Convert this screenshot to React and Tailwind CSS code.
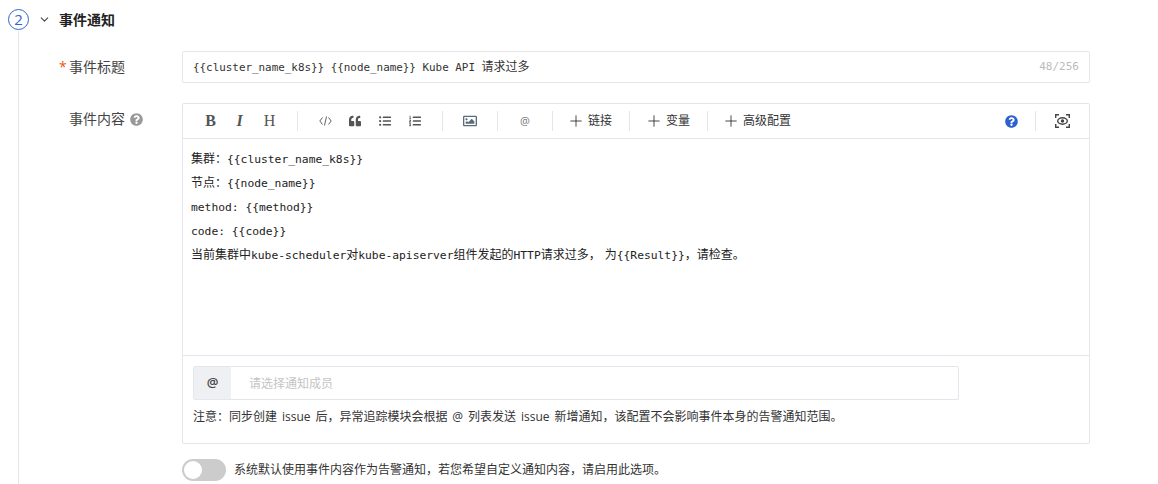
import { ChevronDown, Plus } from 'lucide-react';
import { FaQuoteLeft, FaListUl, FaListOl, FaRegImage, FaQuestionCircle } from 'react-icons/fa';

const sans = "font-['Open_Sans','Noto_Sans_CJK_SC',sans-serif]";
const mono = "font-['DejaVu_Sans_Mono','Noto_Sans_CJK_SC',monospace]";
const serif = "font-['Liberation_Serif',serif]";

// latin runs in the editor are a bit narrower than the CJK ones
const M = ({ children }) => <span className="text-[11.3px]">{children}</span>;

const Divider = ({ className }) => <span className={`block h-5 w-px bg-[#e4e6eb] shrink-0 ${className}`} />;

const CodeIcon = () => (
  <svg width="13" height="10" viewBox="0 0 13 10" fill="none" stroke="#5f6368" strokeWidth="1">
    <path d="M3.5 1.5 0.8 5l2.7 3.5M9.5 1.5 12.2 5 9.5 8.5M7.5 0.5 5.5 9.5" />
  </svg>
);

const PreviewIcon = () => (
  <svg width="15" height="14" viewBox="0 0 15 14" fill="none" stroke="#444" strokeWidth="1.4">
    <path d="M0.7 4V0.7H4M11 0.7h3.3V4M0.7 10v3.3H4M11 13.3h3.3V10" />
    <ellipse cx="7.5" cy="7" rx="4.8" ry="3.2" />
    <circle cx="7.5" cy="7" r="1.7" fill="#444" stroke="none" />
  </svg>
);

function TextButton({ label, className }) {
  return (
    <span className={`flex items-center gap-[3px] text-xs text-[#333] shrink-0 ${className}`}>
      <Plus size={18} strokeWidth={1.1} color="#222" />
      {label}
    </span>
  );
}

function Toolbar() {
  return (
    <div className="h-[35px] flex items-center border-b border-[#e4e6eb] text-[#555] shrink-0">
      <span className={`w-[15px] ml-[20px] text-center text-[16px] font-bold ${serif}`}>B</span>
      <span className={`w-[15px] ml-[14px] text-center text-[16px] font-bold italic ${serif}`}>I</span>
      <span className={`w-[15px] ml-[15px] text-center text-[16px] ${serif}`}>H</span>
      <Divider className="ml-[20px]" />
      <span className="ml-[21px] flex"><CodeIcon /></span>
      <span className="ml-[17px] flex"><FaQuoteLeft size={12} /></span>
      <span className="ml-[18px] flex"><FaListUl size={12} /></span>
      <span className="ml-[18px] flex"><FaListOl size={12} /></span>
      <Divider className="ml-[21px]" />
      <span className="ml-[20px] flex"><FaRegImage size={14} color="#5a6b7b" /></span>
      <Divider className="ml-[20px]" />
      <span className={`ml-[22px] w-[10px] text-[11px] text-[#777] ${sans}`}>@</span>
      <Divider className="ml-[22px]" />
      <TextButton label="链接" className="ml-[14px]" />
      <Divider className="ml-[17px]" />
      <TextButton label="变量" className="ml-[15px]" />
      <Divider className="ml-[17px]" />
      <TextButton label="高级配置" className="ml-[14px]" />
      <span className="ml-auto flex"><FaQuestionCircle size={13} color="#2b62d0" /></span>
      <Divider className="ml-[17px]" />
      <span className="ml-[19px] mr-[19px] flex"><PreviewIcon /></span>
    </div>
  );
}

export default function App() {
  return (
    <div className={`w-[1158px] h-[484px] overflow-hidden bg-white flex text-[#333] ${sans}`}>
      {/* step rail */}
      <div className="w-[21px] ml-[8px] pt-[9px] flex flex-col items-center shrink-0">
        <span className="w-[21px] h-[21px] rounded-full border border-[#2f66cc] text-[#2f66cc] flex items-center justify-center text-[15px] shrink-0">2</span>
        <span className="w-px flex-1 bg-[#e4e6eb] mt-[1px]" />
      </div>

      <div className="flex-1 min-w-0">
        <div className="flex items-center h-[21px] mt-[9px] ml-[9px]">
          <ChevronDown size={13} strokeWidth={2} color="#444" />
          <h2 className="ml-[8px] text-sm font-bold text-[#222]">事件通知</h2>
        </div>

        {/* title */}
        <div className="flex mt-[21px]">
          <label className="w-[153px] shrink-0 pl-[30px] h-[32px] flex items-center text-sm text-[#444]">
            <span className="w-[10px] text-[#e8590c]">*</span>事件标题
          </label>
          <div className="w-[908px] h-[32px] border border-[#e4e6eb] rounded-[2px] flex items-center pl-[10px] pr-[10px]">
            <span className={`pt-[1px] text-xs text-[#333] ${mono}`}>
              <span className="text-[10.9px]">{'{{cluster_name_k8s}} {{node_name}} Kube API '}</span>请求过多
            </span>
            <span className={`ml-auto text-[11px] text-[#bbb] ${mono}`}>48/256</span>
          </div>
        </div>

        {/* content */}
        <div className="flex mt-[20px]">
          <label className="w-[153px] shrink-0 pl-[40px] h-[32px] flex items-center gap-[5px] text-sm text-[#444]">
            事件内容
            <FaQuestionCircle size={13} color="#999" />
          </label>
          <div className="w-[908px] border border-[#e4e6eb] rounded-[2px] h-[341px] flex flex-col">
            <Toolbar />
            <div className={`h-[217px] pl-[8px] pt-[8px] text-xs text-[#222] border-b border-[#e4e6eb] ${mono}`}>
              <p className="h-[24px] leading-[24px]">集群：<M>{'{{cluster_name_k8s}}'}</M></p>
              <p className="h-[24px] leading-[24px]">节点：<M>{'{{node_name}}'}</M></p>
              <p className="h-[24px] leading-[24px]"><M>{'method: {{method}}'}</M></p>
              <p className="h-[24px] leading-[24px]"><M>{'code: {{code}}'}</M></p>
              <p className="h-[24px] leading-[24px]">当前集群中<M>kube-scheduler</M>对<M>kube-apiserver</M>组件发起的<M>HTTP</M>请求过多，<span className="ml-[4px]">为</span><M>{'{{Result}}'}</M>，请检查。</p>
            </div>
            <div className="px-[10px] pt-[10px]">
              <div className="w-[766px] h-[34px] border border-[#e4e6eb] rounded-[2px] flex items-center">
                <span className="w-[37px] h-full bg-[#eef0f4] flex items-center justify-center text-[13px] font-semibold text-[#444]">@</span>
                <span className="ml-[18px] pt-[1px] text-xs text-[#c4c4c4]">请选择通知成员</span>
              </div>
              <p className="mt-[8px] text-xs leading-[18px] text-[#333] [word-spacing:1.8px]">注意：同步创建 issue 后，异常追踪模块会根据 @ 列表发送 issue 新增通知，该配置不会影响事件本身的告警通知范围。</p>
            </div>
          </div>
        </div>

        {/* toggle */}
        <div className="flex items-center mt-[15px] ml-[153px]">
          <span className="w-[44px] h-[22px] rounded-full bg-[#ccc] flex items-center pl-[2px]">
            <span className="w-[18px] h-[18px] rounded-full bg-white" />
          </span>
          <span className="ml-[8px] text-xs text-[#333]">系统默认使用事件内容作为告警通知，若您希望自定义通知内容，请启用此选项。</span>
        </div>
      </div>
    </div>
  );
}
